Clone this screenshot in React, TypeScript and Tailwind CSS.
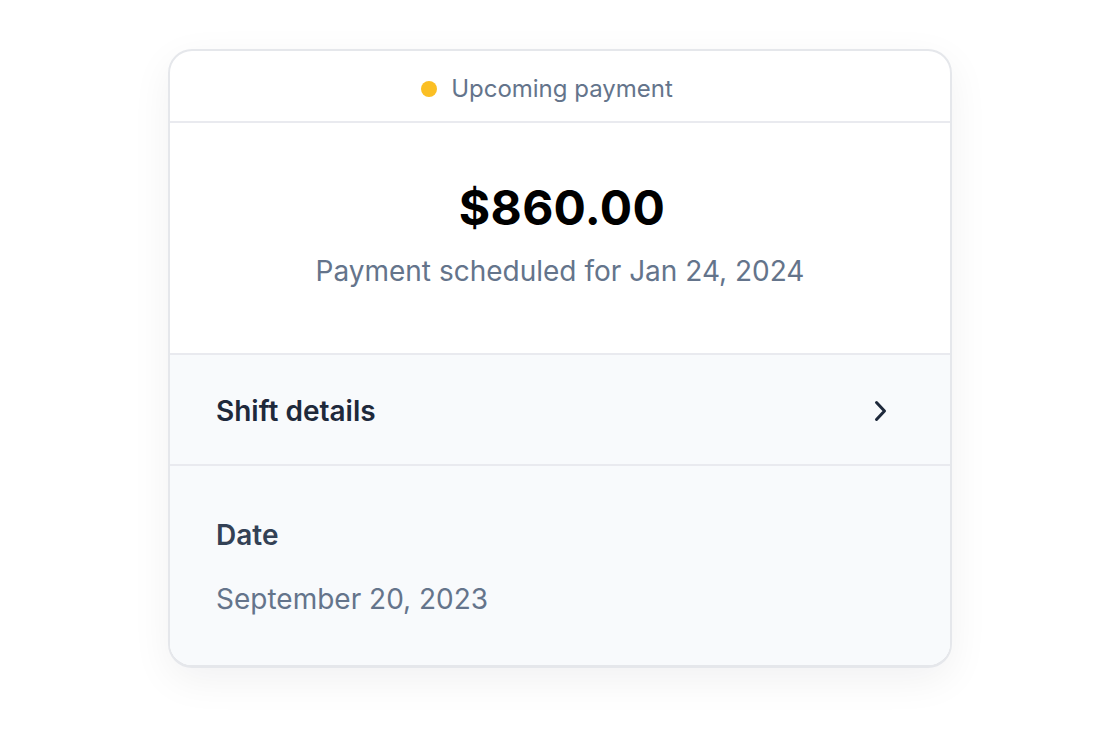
import React from "react";

export default function App() {
  return (
    <div
      className="min-h-[747px] w-full bg-white pt-[49px]"
      style={{ fontFamily: "Inter, 'Noto Sans', sans-serif" }}
    >
      <div className="mx-auto w-[784px] overflow-hidden rounded-[24px] border-2 border-b-[3px] border-[#e5e7eb] bg-white shadow-[0_12px_40px_rgba(15,23,42,0.06)]">
        <div className="flex h-[72px] items-center justify-center gap-[14px] border-b-2 border-[#e9eaef] pt-[5px] pr-[26px]">
          <span className="h-4 w-4 rounded-full bg-[#fbbf24]" />
          <span className="text-[24px] leading-8 text-[#64748b]">Upcoming payment</span>
        </div>
        <div className="flex flex-col items-center border-b-2 border-[#e9eaef] pt-[61px] pb-[64px]">
          <div className="pl-[4px] text-[48px] font-bold leading-[48px] tracking-[0.3px] text-black">$860.00</div>
          <div className="mt-[21px] text-[28px] leading-9 text-[#64748b]">Payment scheduled for Jan 24, 2024</div>
        </div>
        <div className="flex h-[111px] items-center justify-between border-b-2 border-[#e9eaef] bg-[#f8fafc] pt-[2px] pl-[46px] pr-[62px]">
          <span className="text-[28px] font-semibold leading-9 text-[#1e293b]">Shift details</span>
          <svg width="14" height="22" viewBox="0 0 14 22" fill="none">
            <path d="M2.5 2.5 L10.5 11 L2.5 19.5" stroke="#1e293b" strokeWidth="3" strokeLinecap="round" strokeLinejoin="round" />
          </svg>
        </div>
        <div className="flex flex-col bg-[#f8fafc] pl-[46px] pt-[51px] pb-[48px]">
          <span className="text-[28px] font-semibold leading-9 text-[#334155]">Date</span>
          <span className="mt-[28px] text-[28px] leading-9 text-[#64748b]">September 20, 2023</span>
        </div>
      </div>
    </div>
  );
}
